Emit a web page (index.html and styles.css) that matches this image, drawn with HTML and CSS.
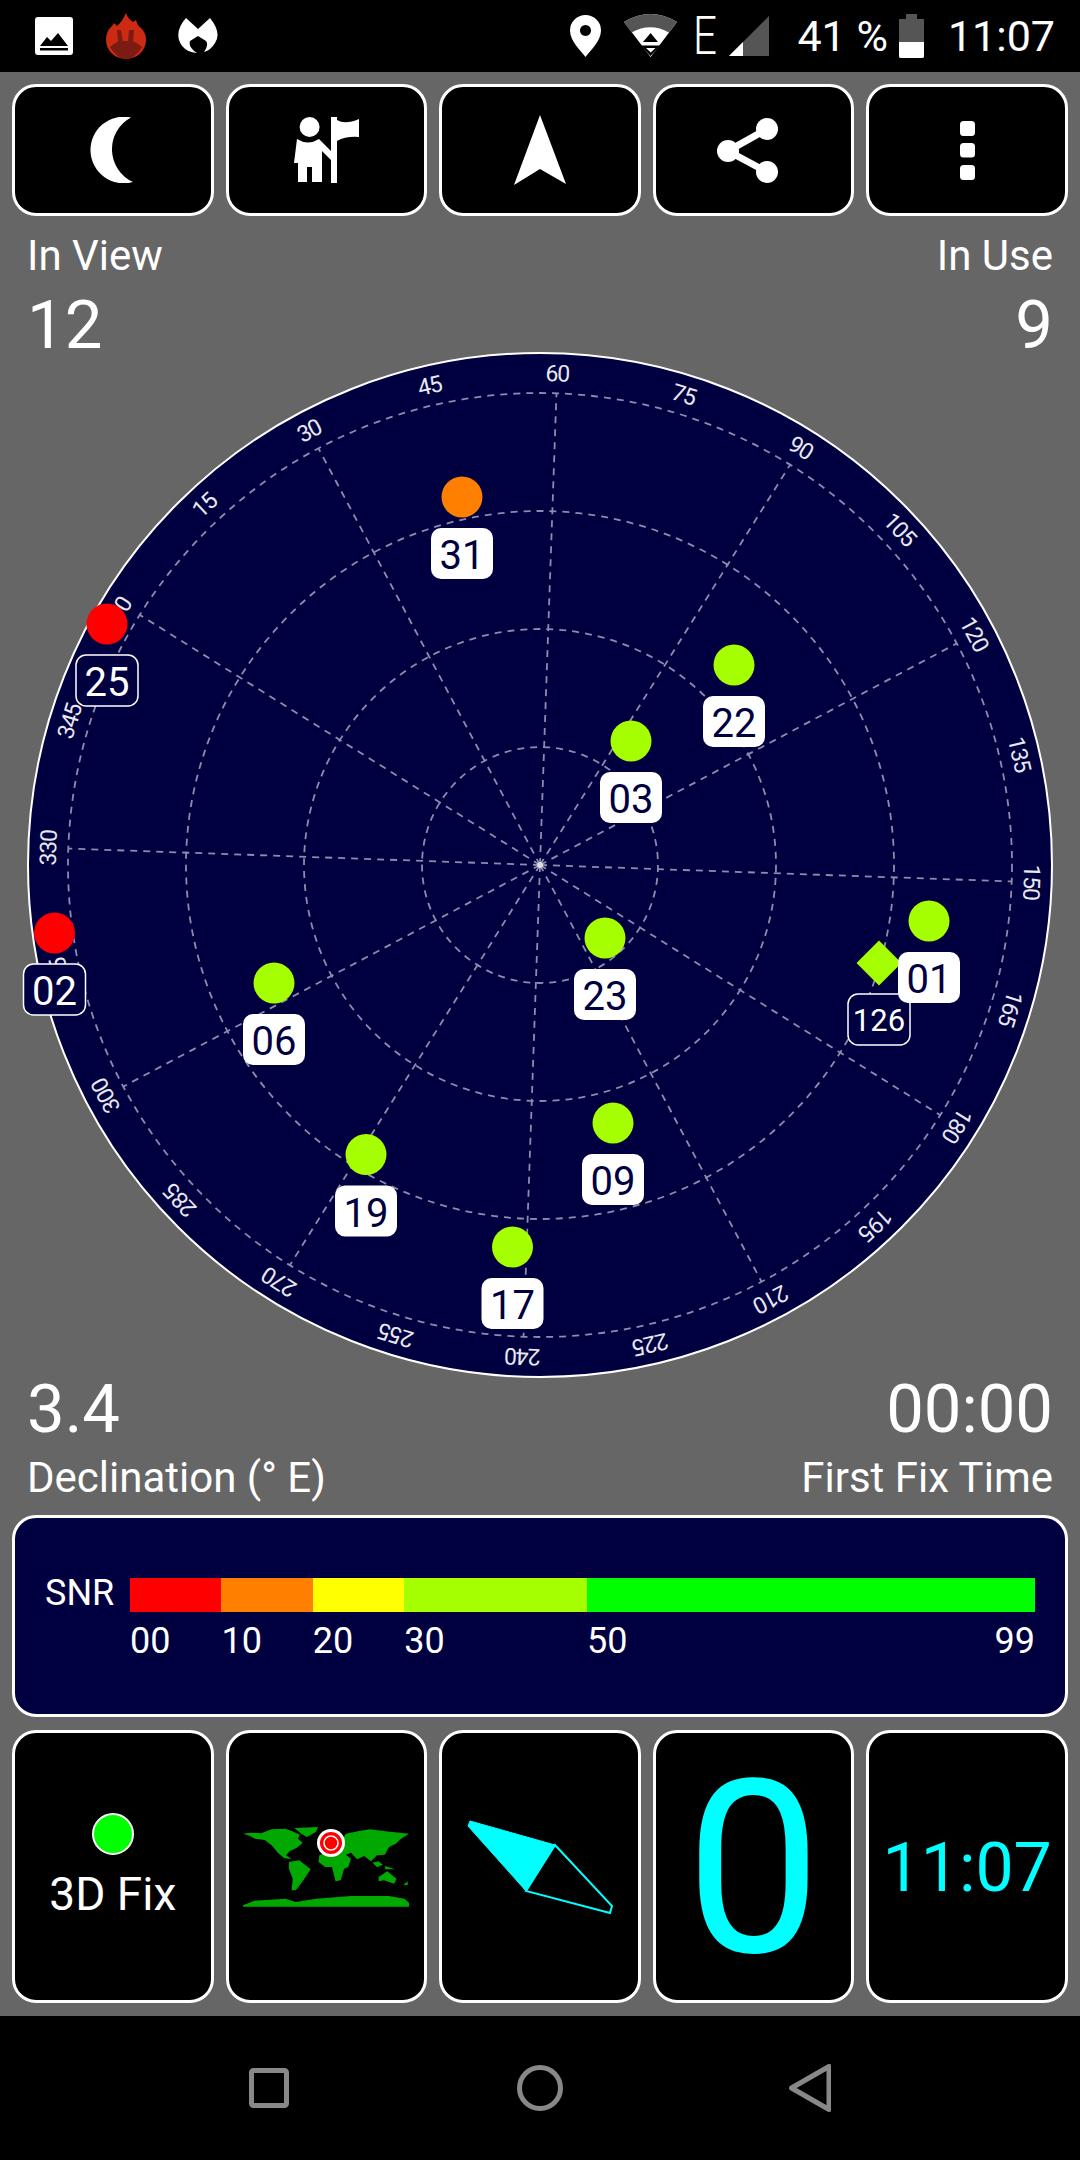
FILE: index.html
```html
<!DOCTYPE html>
<html lang="en">
<head>
<meta charset="utf-8">
<title>GPS Test</title>
<link rel="stylesheet" href="styles.css">
</head>
<body>
<header class="status">
  <div class="status-left">
    <svg class="ico-picture" viewBox="35 17 38 38"><rect x="35" y="17" width="38" height="38" rx="3" fill="#fff"/><path d="M40 46 L47 37 L51 41 L58 33 L68 46 Z M40 48h28v2.500H40z" fill="#000"/></svg>
    <svg class="ico-flame" viewBox="106 13 40 46"><path d="M126 13 Q128 19 133 22 L136 20 Q137 25 141 28 Q146 33 146 40 A20 19 0 0 1 106 40 Q106 31 112 26 L114 23 L117 26 Q122 22 126 13Z" fill="#cc2a12"/><path d="M110 47 Q116 42 120 41 L132 41 Q136 42 142 47 Q135 59 126 59 Q117 59 110 47Z" fill="#7c1a14"/><path d="M117 30h4l2 12h-5zM129 30h5l-1 12h-5z" fill="#7c1a14"/></svg>
    <svg class="ico-mb" viewBox="178 19 41 36"><path d="M186 19 L198 30 L210 19 Q222 34 215 44 Q211 51 204 53 Q209 46 206 42 L198 37 L190 42 Q188 48 197 54 Q183 53 179 41 Q176 30 186 19Z" fill="#fff"/></svg>
  </div>
  <div class="status-right">
    <svg class="ico-pin" viewBox="573 15 31 42"><path fill-rule="evenodd" d="M588.5 15 A15.500 15.500 0 0 1 604 30.500 C604 41 593 51 588.500 57 C584 51 573 41 573 30.500 A15.500 15.500 0 0 1 588.500 15Z M588.500 25 a5.500 5.500 0 1 0 .01 0Z" fill="#fff"/></svg>
    <svg class="ico-wifi" viewBox="627 14 54 44"><path d="M627 22 Q653.500 6 680 22 L653.600 57Z" fill="#fff"/><path d="M627 22 Q653.500 6 680 22 L672 32.500 Q653.500 22 634.500 32.500Z" fill="#555"/><path d="M653.600 33 L646 42 H661Z M644 45.500 H663 L653.600 56Z" fill="#000"/><path d="M649 48 H658.500 L653.700 52.500Z" fill="#fff"/></svg>
    <span class="net">E</span>
    <svg class="ico-signal" viewBox="733 16 40 40"><path d="M773 16 V56 H733Z" fill="#555"/><path d="M747 42 V56 H733Z" fill="#fff"/></svg>
    <span class="pct">41 %</span>
    <svg class="ico-batt" viewBox="901 14 25 44"><path d="M908 14h11v5h7v39h-25v-39h7z" fill="#555"/><path d="M901 42h25v14a2 2 0 0 1-2 2h-21a2 2 0 0 1-2-2z" fill="#fff"/></svg>
    <span class="clock">11:07</span>
  </div>
</header>

<main class="screen">
  <nav class="toolbar">
    <div class="btn"><svg class="ico-moon" viewBox="90 117 44 66"><path d="M131 117.500 A33.300 33.300 0 1 0 133 182 A36 36 0 0 1 131 117.500Z" fill="#fff"/></svg></div>
    <div class="btn"><svg class="ico-person" viewBox="294 117 65 66"><circle cx="309.600" cy="127" r="10" fill="#fff"/><path d="M297 139 Q308 146 319 139 L331 151 V160 L322 151 V182 H312 V167 H307 V182 H298 V163 H294Z" fill="#fff"/><path d="M331 117 H337 V120 Q345 125 359 119 V137 Q346 136 337 141 V183 H331Z" fill="#fff"/></svg></div>
    <div class="btn"><svg class="ico-arrow" viewBox="514 114 52 70"><path d="M540 114 L566 183 L540 168 L514 184Z" fill="#fff"/></svg></div>
    <div class="btn"><svg class="ico-share" viewBox="717 118 61 65"><path d="M767 129 L728 151 L767 172" fill="none" stroke="#fff" stroke-width="7"/><circle cx="767" cy="129" r="11" fill="#fff"/><circle cx="728" cy="151" r="11" fill="#fff"/><circle cx="767" cy="172" r="11" fill="#fff"/></svg></div>
    <div class="btn"><svg class="ico-more" viewBox="960 121 15 59"><rect x="960" y="121" width="15" height="15" rx="3.500" fill="#fff"/><rect x="960" y="143" width="15" height="14.500" rx="3.500" fill="#fff"/><rect x="960" y="165" width="15" height="15" rx="3.500" fill="#fff"/></svg></div>
  </nav>

  <section class="stats stats-top">
    <div><div class="cap">In View</div><div class="num">12</div></div>
    <div class="right"><div class="cap">In Use</div><div class="num">9</div></div>
  </section>

  <svg class="radar" viewBox="0 0 1080 1030">
    <circle cx="540" cy="515" r="512" class="disc"/>
    <circle cx="540" cy="515" r="118" class="dash"/>
    <circle cx="540" cy="515" r="236" class="dash"/>
    <circle cx="540" cy="515" r="354" class="dash"/>
    <circle cx="540" cy="515" r="472" class="dash"/>
    <g class="spokes">
      <line x1="540" y1="515" x2="540" y2="43" transform="rotate(-58 540 515)"/>
      <line x1="540" y1="515" x2="540" y2="43" transform="rotate(-28 540 515)"/>
      <line x1="540" y1="515" x2="540" y2="43" transform="rotate(2 540 515)"/>
      <line x1="540" y1="515" x2="540" y2="43" transform="rotate(32 540 515)"/>
      <line x1="540" y1="515" x2="540" y2="43" transform="rotate(62 540 515)"/>
      <line x1="540" y1="515" x2="540" y2="43" transform="rotate(92 540 515)"/>
      <line x1="540" y1="515" x2="540" y2="43" transform="rotate(122 540 515)"/>
      <line x1="540" y1="515" x2="540" y2="43" transform="rotate(152 540 515)"/>
      <line x1="540" y1="515" x2="540" y2="43" transform="rotate(182 540 515)"/>
      <line x1="540" y1="515" x2="540" y2="43" transform="rotate(212 540 515)"/>
      <line x1="540" y1="515" x2="540" y2="43" transform="rotate(242 540 515)"/>
      <line x1="540" y1="515" x2="540" y2="43" transform="rotate(272 540 515)"/>
    </g>
    <circle cx="540" cy="515" r="3" class="hub"/>
    <g class="deg">
      <text transform="rotate(-58 540 515) translate(540 31)">0</text>
      <text transform="rotate(-43 540 515) translate(540 31)">15</text>
      <text transform="rotate(-28 540 515) translate(540 31)">30</text>
      <text transform="rotate(-13 540 515) translate(540 31)">45</text>
      <text transform="rotate(2 540 515) translate(540 31)">60</text>
      <text transform="rotate(17 540 515) translate(540 31)">75</text>
      <text transform="rotate(32 540 515) translate(540 31)">90</text>
      <text transform="rotate(47 540 515) translate(540 31)">105</text>
      <text transform="rotate(62 540 515) translate(540 31)">120</text>
      <text transform="rotate(77 540 515) translate(540 31)">135</text>
      <text transform="rotate(92 540 515) translate(540 31)">150</text>
      <text transform="rotate(107 540 515) translate(540 31)">165</text>
      <text transform="rotate(122 540 515) translate(540 31)">180</text>
      <text transform="rotate(137 540 515) translate(540 31)">195</text>
      <text transform="rotate(152 540 515) translate(540 31)">210</text>
      <text transform="rotate(167 540 515) translate(540 31)">225</text>
      <text transform="rotate(182 540 515) translate(540 31)">240</text>
      <text transform="rotate(197 540 515) translate(540 31)">255</text>
      <text transform="rotate(212 540 515) translate(540 31)">270</text>
      <text transform="rotate(227 540 515) translate(540 31)">285</text>
      <text transform="rotate(242 540 515) translate(540 31)">300</text>
      <text transform="rotate(257 540 515) translate(540 31)">315</text>
      <text transform="rotate(272 540 515) translate(540 31)">330</text>
      <text transform="rotate(287 540 515) translate(540 31)">345</text>
    </g>
    <g class="sat used" transform="translate(462 147)"><circle r="20.500" class="c-orange"/><rect x="-31" y="31" width="62" height="51" rx="10"/><text y="72">31</text></g>
    <g class="sat free" transform="translate(107 274)"><circle r="20.500" class="c-red"/><rect x="-31" y="31" width="62" height="51" rx="10"/><text y="72">25</text></g>
    <g class="sat used" transform="translate(734 315)"><circle r="20.500" class="c-lime"/><rect x="-31" y="31" width="62" height="51" rx="10"/><text y="72">22</text></g>
    <g class="sat used" transform="translate(631 391)"><circle r="20.500" class="c-lime"/><rect x="-31" y="31" width="62" height="51" rx="10"/><text y="72">03</text></g>
    <g class="sat free" transform="translate(54.500 583)"><circle r="20.500" class="c-red"/><rect x="-31" y="31" width="62" height="51" rx="10"/><text y="72">02</text></g>
    <g class="sat used" transform="translate(605 588)"><circle r="20.500" class="c-lime"/><rect x="-31" y="31" width="62" height="51" rx="10"/><text y="72">23</text></g>
    <g class="sat used" transform="translate(274 633)"><circle r="20.500" class="c-lime"/><rect x="-31" y="31" width="62" height="51" rx="10"/><text y="72">06</text></g>
    <g class="sat free small" transform="translate(879 613)"><path d="M0 -22.500 L22.500 0 L0 22.500 L-22.500 0Z" class="c-lime"/><rect x="-31" y="31" width="62" height="51" rx="10"/><text y="68">126</text></g>
    <g class="sat used" transform="translate(929 571)"><circle r="20.500" class="c-lime"/><rect x="-31" y="31" width="62" height="51" rx="10"/><text y="72">01</text></g>
    <g class="sat used" transform="translate(613 773)"><circle r="20.500" class="c-lime"/><rect x="-31" y="31" width="62" height="51" rx="10"/><text y="72">09</text></g>
    <g class="sat used" transform="translate(366 804.500)"><circle r="20.500" class="c-lime"/><rect x="-31" y="31" width="62" height="51" rx="10"/><text y="72">19</text></g>
    <g class="sat used" transform="translate(512.500 897)"><circle r="20.500" class="c-lime"/><rect x="-31" y="31" width="62" height="51" rx="10"/><text y="72">17</text></g>
  </svg>

  <section class="stats stats-bottom">
    <div><div class="num">3.4</div><div class="cap">Declination (° E)</div></div>
    <div class="right"><div class="num">00:00</div><div class="cap">First Fix Time</div></div>
  </section>

  <section class="snr">
    <div class="snr-label">SNR</div>
    <div class="snr-body">
      <div class="snr-bar">
        <div class="seg s10 red"></div>
        <div class="seg s10 orange"></div>
        <div class="seg s10 yellow"></div>
        <div class="seg s20 lime"></div>
        <div class="seg s49 green"></div>
      </div>
      <div class="snr-scale">
        <div class="seg s10">00</div>
        <div class="seg s10">10</div>
        <div class="seg s10">20</div>
        <div class="seg s20">30</div>
        <div class="seg s49 split"><span>50</span><span>99</span></div>
      </div>
    </div>
  </section>

  <section class="tiles">
    <div class="btn tile">
      <span class="fix-dot"></span>
      <span class="fix-text">3D Fix</span>
    </div>
    <div class="btn tile">
      <svg class="map" viewBox="707 385 481 240" preserveAspectRatio="none">
        <g class="land">
          <path d="M707 405 L730 402 L760 404 L790 392 L830 390 L850 398 L872 408 L866 420 L880 432 L862 448 L842 458 L832 470 L848 482 L826 478 L808 462 L790 440 L770 424 L742 420 L728 412Z"/>
          <path d="M856 388 L925 385 L918 400 L892 415 L876 405Z"/>
          <path d="M840 490 L870 485 L903 512 L882 545 L860 575 L848 575 L851 540 L840 510Z"/>
          <path d="M1005 405 L1040 398 L1075 392 L1120 398 L1188 405 L1165 420 L1150 435 L1130 445 L1118 468 L1095 470 L1078 488 L1058 472 L1038 482 L1020 462 L1005 468 L1020 480 L1012 505 L1000 510 L990 545 L975 548 L965 505 L945 505 L926 490 L928 470 L960 458 L1000 440 L995 420Z"/>
          <path d="M1100 535 L1125 518 L1152 540 L1145 555 L1115 545 L1100 548Z"/>
          <path d="M1082 492 L1100 488 L1112 498 L1096 506Z M1118 502 L1148 512 L1120 512Z"/>
          <path d="M1172 558 L1184 548 L1184 560Z"/>
          <path d="M707 620 L740 606 L830 600 L860 610 L920 600 L1020 592 L1130 592 L1175 600 L1188 612 V624 H707Z"/>
        </g>
      </svg>
      <svg class="target" viewBox="0 0 28 28"><circle cx="14" cy="14" r="14" fill="#fff"/><circle cx="14" cy="14" r="11" fill="#f00"/><circle cx="14" cy="14" r="7" fill="#f00" stroke="#fff" stroke-width="1.500"/><circle cx="14" cy="14" r="5" fill="#f00"/></svg>
    </div>
    <div class="btn tile">
      <svg class="compass" viewBox="466 1818 148 96"><path d="M470 1820 L555 1844 L526 1890 L468 1825Z" class="needle-fill"/><path d="M555 1844 L612 1905 L610 1912 L526 1890Z" class="needle-line"/></svg>
    </div>
    <div class="btn tile"><span class="big">0</span></div>
    <div class="btn tile"><span class="time">11:07</span></div>
  </section>
</main>

<footer class="navbar">
  <svg class="nav-square" viewBox="0 0 40 40"><rect x="2.500" y="2.500" width="35" height="35" rx="2" fill="none" stroke="#888" stroke-width="5"/></svg>
  <svg class="nav-circle" viewBox="0 0 46 46"><circle cx="23" cy="23" r="20.500" fill="none" stroke="#888" stroke-width="5"/></svg>
  <svg class="nav-back" viewBox="789 2064 42 48"><path d="M791.500 2088 L829 2066.500 V2109.500Z" fill="none" stroke="#888" stroke-width="5" stroke-linejoin="round"/></svg>
</footer>
</body>
</html>
```
FILE: styles.css
```css
* { box-sizing: border-box; }
html, body { margin: 0; padding: 0; }
body {
  width: 1080px;
  height: 2160px;
  background: #666;
  color: #fff;
  font-family: Roboto, "Liberation Sans", sans-serif;
  display: flex;
  flex-direction: column;
  overflow: hidden;
}
svg { display: block; flex: none; }

/* status bar */
.status {
  height: 72px;
  background: #000;
  display: flex;
  justify-content: space-between;
  align-items: center;
  padding: 0 25px 0 35px;
}
.status-left, .status-right { display: flex; align-items: center; }
.ico-picture { width: 38px; height: 38px; }
.ico-flame { width: 40px; height: 46px; margin-left: 33px; }
.ico-mb { width: 41px; height: 36px; margin-left: 32px; }
.ico-pin { width: 31px; height: 42px; }
.ico-wifi { width: 54px; height: 44px; margin-left: 23px; }
.net { font-size: 54px; font-weight: 300; width: 20px; margin-left: 15px; line-height: 60px; transform: scaleX(.78); transform-origin: left center; }
.ico-signal { width: 40px; height: 40px; margin-left: 16px; }
.pct { font-size: 43px; margin-left: 28px; line-height: 50px; }
.ico-batt { width: 25px; height: 44px; margin-left: 11px; }
.clock { font-size: 43px; margin-left: 24px; line-height: 50px; }

/* main */
.screen { flex: 1; display: flex; flex-direction: column; padding: 12px 12px 0; }
.toolbar { display: flex; gap: 12px; height: 132px; }
.btn {
  flex: 1 1 0;
  background: #000;
  border: 3px solid #fff;
  border-radius: 24px;
  display: flex;
  flex-direction: column;
  align-items: center;
  justify-content: center;
  position: relative;
}
.ico-moon { width: 44px; height: 66px; margin-right: 2px; }
.ico-person { width: 65px; height: 66px; }
.ico-arrow { width: 52px; height: 70px; }
.ico-share { width: 61px; height: 65px; margin-right: 12px; }
.ico-more { width: 15px; height: 59px; }

.stats { display: flex; justify-content: space-between; padding: 0 15px; }
.stats .right { text-align: right; }
.stats-top { height: 134px; padding-top: 15px; }
.stats-top .num { margin-top: 15px; }
.stats-bottom { height: 135px; }
.stats-bottom .cap { margin-top: 15px; }
.cap { font-size: 42px; line-height: 50px; }
.num { font-size: 67px; line-height: 58px; }

.radar { width: 1080px; height: 1030px; margin-left: -12px; }
.disc { fill: #000040; stroke: #fff; stroke-width: 2; }
.dash { fill: none; stroke: #8c8cac; stroke-width: 1.8; stroke-dasharray: 7 6; }
.spokes line { stroke: #8c8cac; stroke-width: 1.8; stroke-dasharray: 7 6; }
.hub { fill: #ddd; }
.deg text { fill: #e8e8f0; font-size: 23px; letter-spacing: -1.2px; text-anchor: middle; }
.c-red { fill: #f00; }
.c-orange { fill: #ff8000; }
.c-lime { fill: #a6ff00; }
.sat text { font-size: 40px; text-anchor: middle; }
.sat.small text { font-size: 31px; }
.used rect { fill: #fff; }
.used text { fill: #000040; }
.free rect { fill: #000040; stroke: #fff; stroke-width: 1.5; }
.free text { fill: #fff; }

/* SNR */
.snr {
  height: 202px;
  background: #000040;
  border: 3px solid #fff;
  border-radius: 24px;
  display: flex;
  padding: 60px 30px 0 30px;
}
.snr-label { font-size: 36px; width: 85px; line-height: 30px; }
.snr-body { flex: 1; }
.snr-bar, .snr-scale { display: flex; }
.snr-bar { height: 34px; }
.snr-scale { font-size: 36px; line-height: 42px; margin-top: 8px; }
.s10 { flex: 10 1 0; }
.s20 { flex: 20 1 0; }
.s49 { flex: 49 1 0; }
.red { background: #f00; }
.orange { background: #ff8000; }
.yellow { background: #ff0; }
.lime { background: #a6ff00; }
.green { background: #0f0; }
.split { display: flex; justify-content: space-between; }

/* bottom tiles */
.tiles { display: flex; gap: 12px; height: 273px; margin-top: 13px; }
.fix-dot { width: 42px; height: 42px; border-radius: 50%; background: #0f0; border: 2px solid #fff; margin-bottom: 12px; }
.fix-text { font-size: 46px; line-height: 54px; }
.map { width: 166px; height: 80px; }
.land path { fill: #00a800; }
.target { position: absolute; width: 28px; height: 28px; left: 88px; top: 96px; }
.compass { width: 148px; height: 96px; }
.needle-fill { fill: #0ff; stroke: #0ff; stroke-width: 1; }
.needle-line { fill: none; stroke: #0ff; stroke-width: 2; }
.big { font-size: 241px; line-height: 270px; color: #0ff; margin-top: 6px; }
.time { font-size: 68px; color: #0ff; margin-top: 3px; }

/* navigation bar */
.navbar {
  height: 144px;
  background: #000;
  display: flex;
  align-items: center;
  justify-content: center;
  position: relative;
}
.nav-square { width: 40px; height: 40px; }
.nav-circle { width: 46px; height: 46px; margin-left: 228px; }
.nav-back { width: 42px; height: 48px; margin-left: 226px; }
```
